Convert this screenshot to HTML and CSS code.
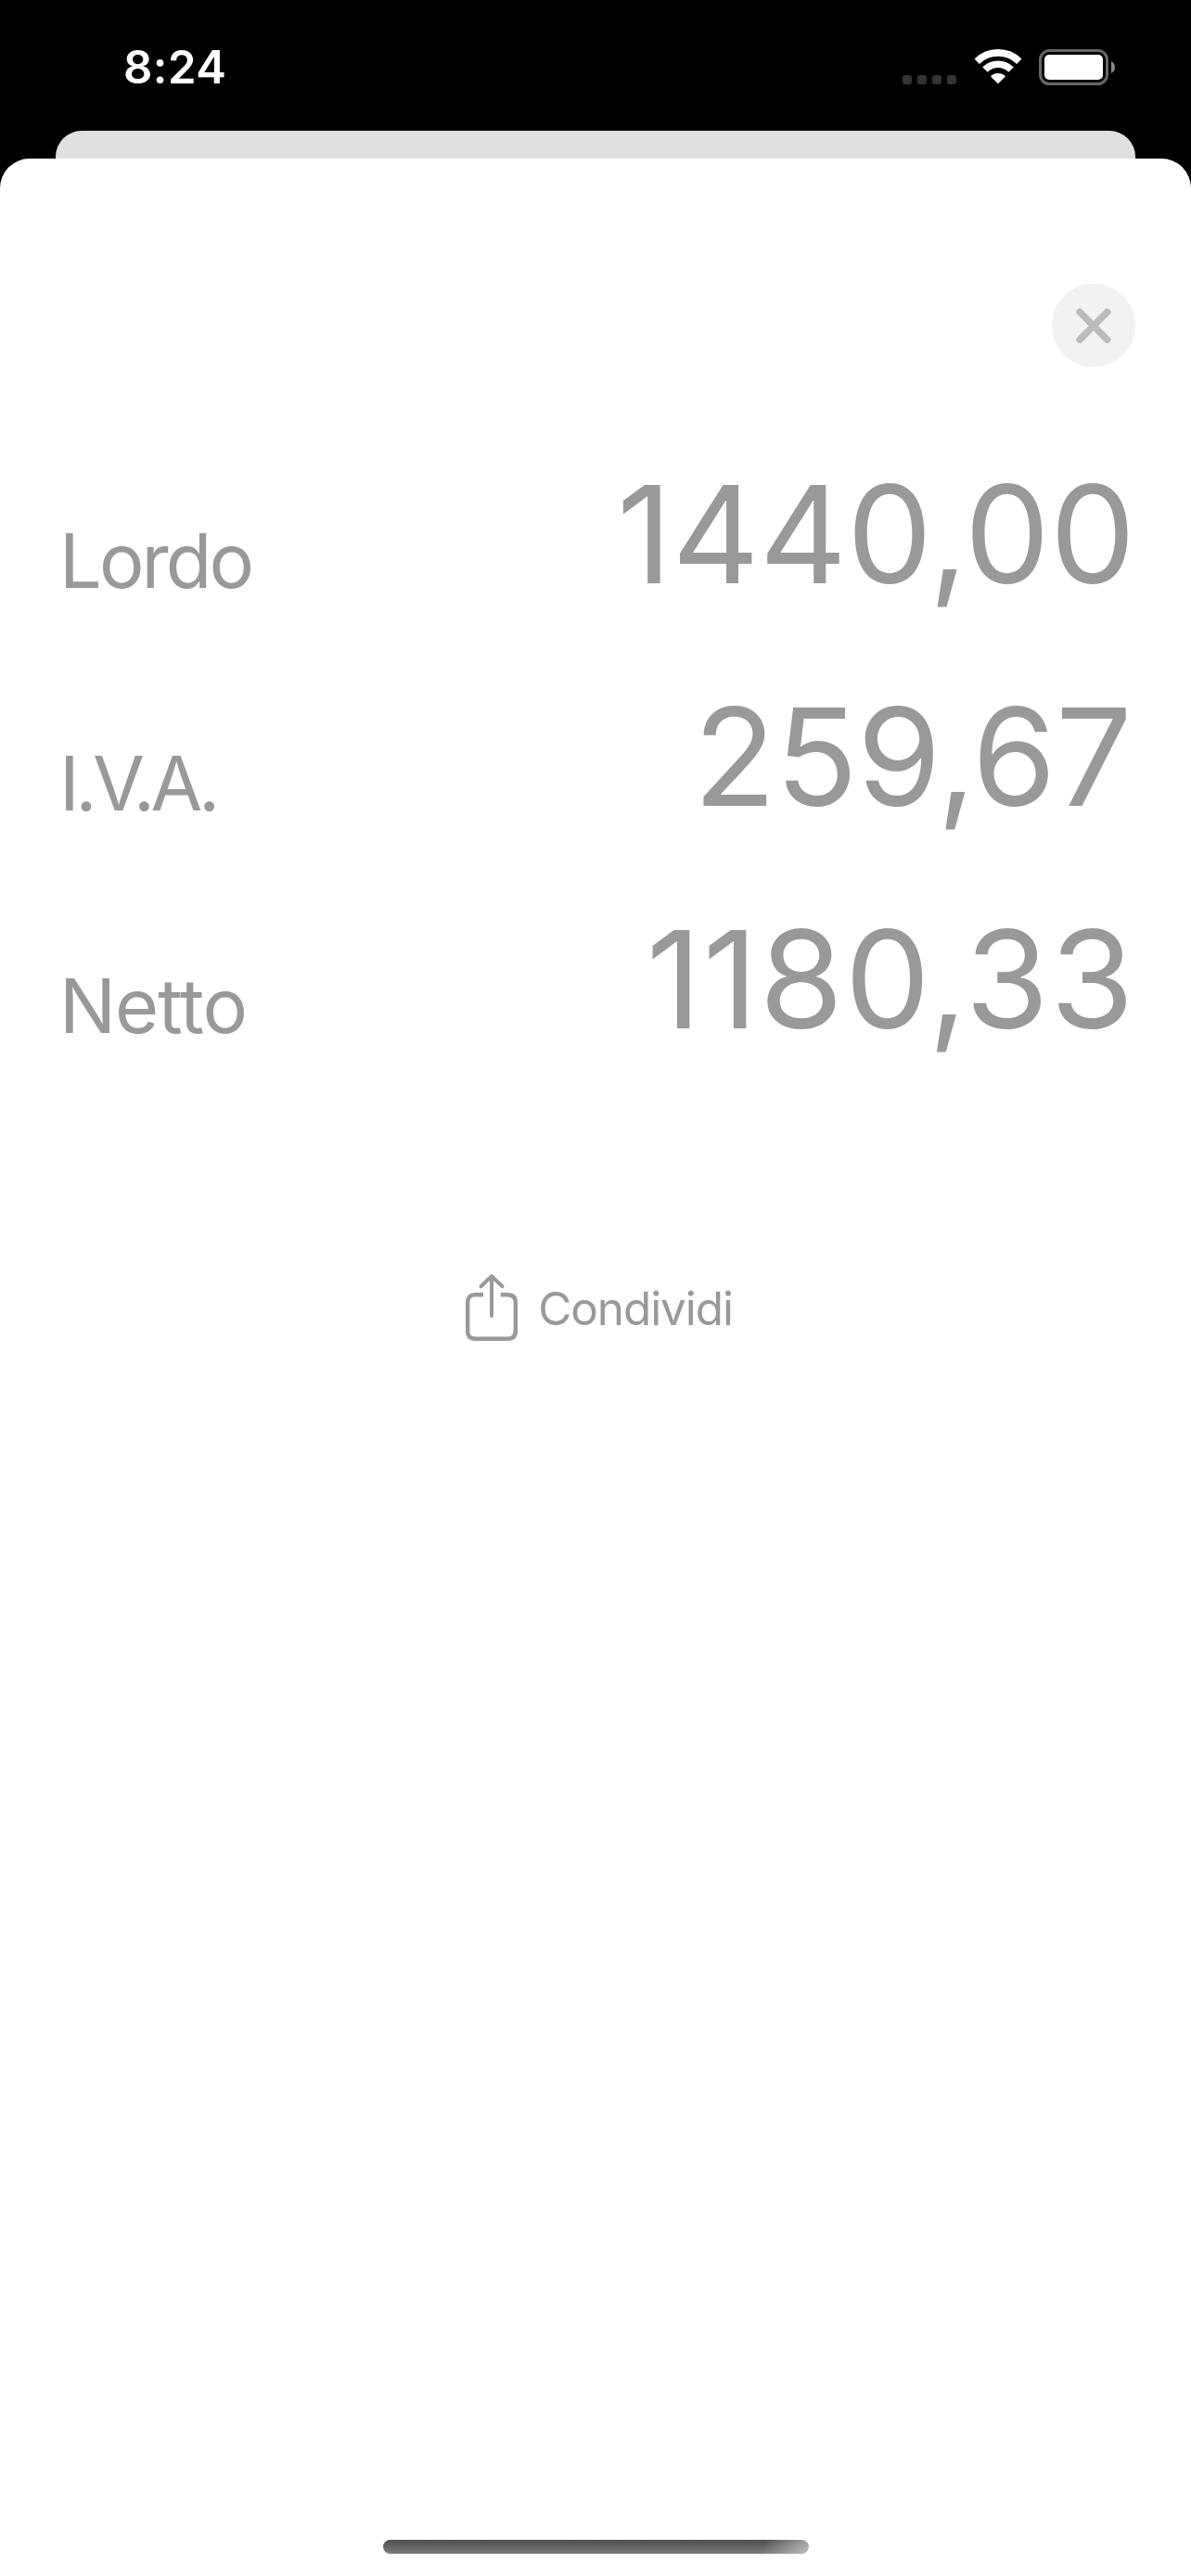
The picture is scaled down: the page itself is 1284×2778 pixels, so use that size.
FILE: index.html
```
<!DOCTYPE html>
<html lang="it">
<head>
    <meta charset="UTF-8">
    <title>Scorporo IVA</title>
    <link rel="stylesheet" href="styles.css">
</head>
<body>
    <div class="status-bar">
        <div class="time">8:24</div>
        <div class="status-icons">
            <div class="signal">
                <span></span><span></span><span></span><span></span>
            </div>
            <svg class="wifi" width="52" height="38" viewBox="0 0 52 38">
                <g fill="none" stroke="#fff" stroke-width="7.6">
                    <path d="M3.2 13.2 A32.5 32.5 0 0 1 48.8 13.2"/>
                    <path d="M11.9 22 A20 20 0 0 1 40.1 22"/>
                </g>
                <path d="M26 37.3 L18.6 29.9 Q17.9 29 18.9 28.3 Q26 23.9 33.1 28.3 Q34.1 29 33.4 29.9 Z" fill="#fff"/>
            </svg>
            <svg class="battery" width="83" height="39" viewBox="0 0 83 39">
                <rect x="1.5" y="1.5" width="72" height="36" rx="10" fill="none" stroke="#666" stroke-width="3"/>
                <rect x="6" y="6" width="63" height="27" rx="5" fill="#fff"/>
                <path d="M78 13 Q82 15 82 19.5 Q82 24 78 26 Z" fill="#888"/>
            </svg>
        </div>
    </div>

    <div class="back-sheet"></div>

    <div class="sheet">
        <button class="close-button" aria-label="Chiudi">
            <svg width="90" height="90" viewBox="0 0 90 90">
                <path d="M30 30.3 L59.7 60.3 M59.7 30.3 L30 60.3" stroke="#bbb" stroke-width="7.4" stroke-linecap="round"/>
            </svg>
        </button>

        <div class="results">
            <div class="row gross">
                <span class="label">Lordo</span>
                <span class="amount">1440,00</span>
            </div>
            <div class="row vat">
                <span class="label">I.V.A.</span>
                <span class="amount">259,67</span>
            </div>
            <div class="row net">
                <span class="label">Netto</span>
                <span class="amount">1180,33</span>
            </div>
        </div>

        <button class="share-button">
            <svg width="60" height="78" viewBox="0 0 60 78" fill="none" stroke="#999" stroke-width="4.4">
                <path d="M21 26.2 H13 Q4.2 26.2 4.2 34.5 V65.5 Q4.2 73.8 13 73.8 H47 Q55.8 73.8 55.8 65.5 V34.5 Q55.8 26.2 47 26.2 H39.7"/>
                <path d="M30 49 V6.2 M18.5 17.3 L30 6.2 L41.5 17.3" stroke-width="4" stroke-linecap="round" stroke-linejoin="round"/>
            </svg>
            <span>Condividi</span>
        </button>

        <div class="home-indicator"></div>
    </div>
</body>
</html>
```

FILE: styles.css
```
* {
    box-sizing: border-box;
}
body {
    margin: 0;
    height: 2778px;
    display: flex;
    flex-direction: column;
    background-color: #000;
    font-family: Inter, "Liberation Sans", sans-serif;
    color: #999;
}
button {
    border: none;
    padding: 0;
    font-family: inherit;
    color: inherit;
}
svg {
    display: block;
}

/* status bar */
.status-bar {
    height: 141px;
    padding: 53px 81px 0 133px;
    display: flex;
    justify-content: space-between;
    align-items: flex-start;
}
.time {
    font-size: 49px;
    font-weight: 600;
    line-height: 40px;
    letter-spacing: 0.5px;
    color: #fff;
}
.status-icons {
    display: flex;
}
.signal {
    display: flex;
    gap: 6px;
    margin: 28px 19px 0 0;
}
.signal span {
    width: 10px;
    height: 10px;
    border-radius: 3px;
    background-color: #333;
}
.wifi {
    margin-right: 18px;
}

/* the page below the modal */
.back-sheet {
    height: 30px;
    margin: 0 60px;
    border-radius: 28px 28px 0 0;
    background-color: #e0e0e0;
}

.sheet {
    flex: 1;
    display: flex;
    flex-direction: column;
    align-items: center;
    padding: 135px 60px 24px;
    border-radius: 32px 32px 0 0;
    background-color: #fff;
}
.close-button {
    align-self: flex-end;
    width: 90px;
    height: 90px;
    border-radius: 50%;
    background-color: #f2f2f2;
}

.results {
    align-self: stretch;
    margin-top: 80px;
}
.row {
    height: 240px;
    padding-left: 4px;
    display: flex;
    justify-content: space-between;
    align-items: flex-start;
}
.label {
    margin-top: 49px;
    font-size: 81px;
    line-height: 160px;
}
.amount {
    font-size: 146px;
    line-height: 200px;
}
.gross .label {
    letter-spacing: -2.9px;
}
.vat .label {
    letter-spacing: -4.5px;
}
.net .label {
    letter-spacing: -1px;
}
.vat .amount {
    padding-right: 4px;
    letter-spacing: -0.6px;
}
.net .amount {
    letter-spacing: 1.6px;
}

.share-button {
    display: flex;
    align-items: center;
    gap: 20px;
    margin-top: 174px;
    padding-left: 6px;
    background: none;
    font-size: 49.5px;
    letter-spacing: -1.1px;
}
.share-button span {
    padding-top: 3px;
}
.home-indicator {
    width: 459px;
    height: 15px;
    margin-top: auto;
    border-radius: 8px;
    background: linear-gradient(100deg, transparent 89%, rgba(255, 255, 255, 0.5) 100%), linear-gradient(#4d4d4d, #7c7c7c);
}
```
